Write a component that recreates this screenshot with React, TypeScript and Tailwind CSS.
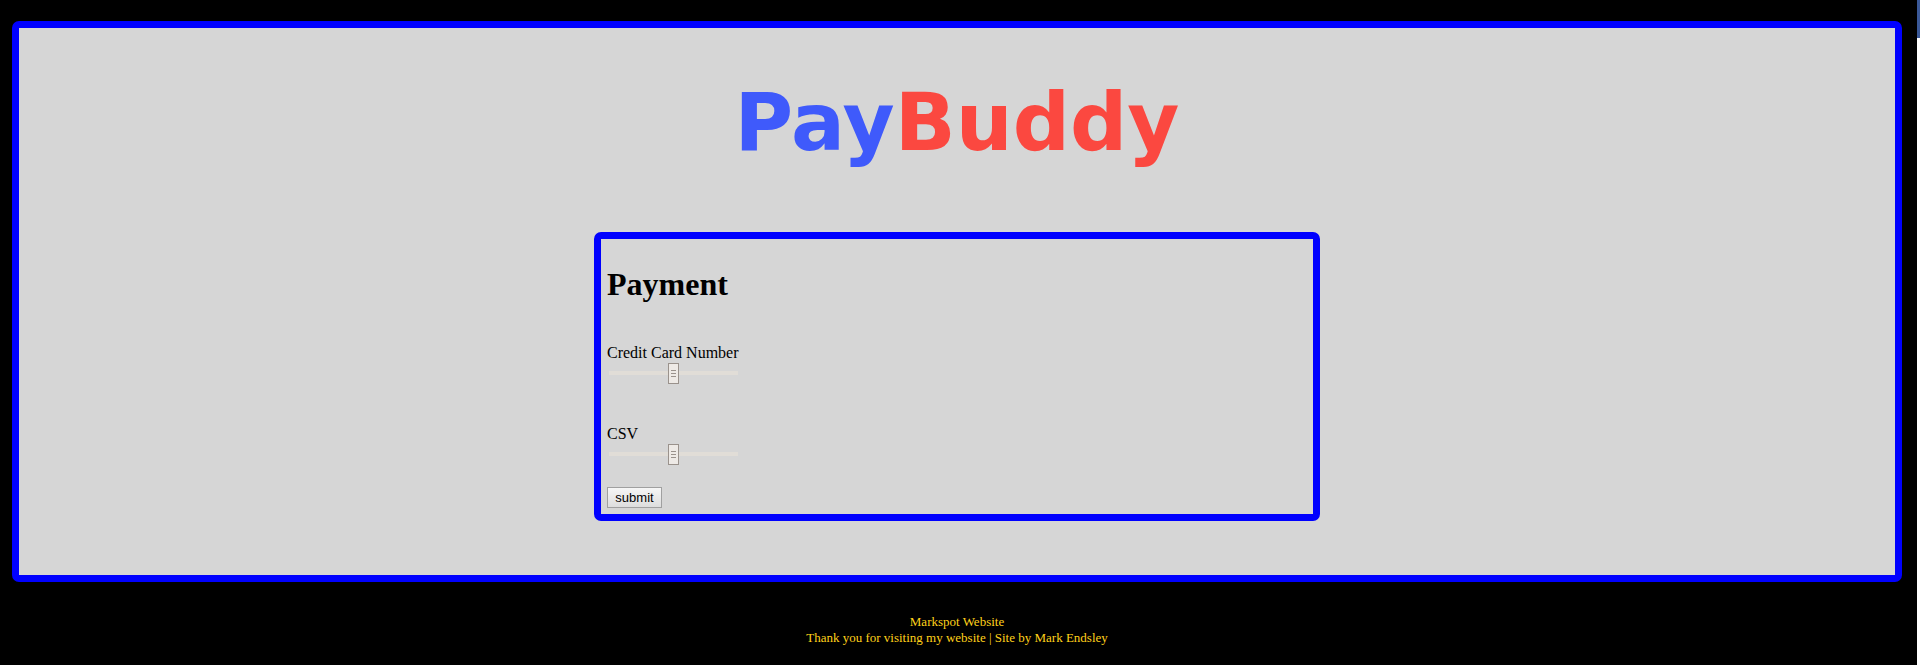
import { useId, useState } from "react";

function Logo() {
  return (
    <div className="text-center font-['Verdana','DejaVu_Sans',sans-serif] text-[80px] leading-24 font-bold">
      <span className="text-[#3f5afb]">Pay</span>
      <span className="text-[#fb4840]">Buddy</span>
    </div>
  );
}

function RangeField({ label }: { label: string }) {
  const id = useId();
  const [value, setValue] = useState(50);
  return (
    <div>
      <label htmlFor={id} className="block leading-[19px]">
        {label}
      </label>
      <input
        id={id}
        type="range"
        value={value}
        onChange={(e) => setValue(Number(e.target.value))}
        className="mx-0.5 block h-[21px] w-[129px] appearance-none bg-transparent [&::-webkit-slider-runnable-track]:h-1 [&::-webkit-slider-runnable-track]:bg-[#e1ddd7] [&::-webkit-slider-thumb]:-mt-2 [&::-webkit-slider-thumb]:h-[21px] [&::-webkit-slider-thumb]:w-[11px] [&::-webkit-slider-thumb]:appearance-none [&::-webkit-slider-thumb]:border [&::-webkit-slider-thumb]:border-[#9a928c] [&::-webkit-slider-thumb]:bg-[#eeeae6] [&::-webkit-slider-thumb]:bg-[linear-gradient(#9a928c_1px,transparent_1px,transparent_3px,#9a928c_3px,#9a928c_4px,transparent_4px,transparent_6px,#9a928c_6px)] [&::-webkit-slider-thumb]:bg-[length:5px_7px] [&::-webkit-slider-thumb]:bg-center [&::-webkit-slider-thumb]:bg-no-repeat"
      />
    </div>
  );
}

export default function App() {
  return (
    <div className="flex min-h-screen bg-black font-['Liberation_Serif',serif] text-base text-black">
      <div className="grow pt-[21px] pr-[15px] pl-3">
        <main className="rounded-[7px] border-[7px] border-[#0000ff] bg-[#d6d6d6] pt-[47px] pb-[54px]">
          <Logo />
          <form
            onSubmit={(e) => e.preventDefault()}
            className="mx-auto mt-[61px] w-[726px] rounded-[7px] border-[7px] border-[#0000ff] p-1.5"
          >
            <h1 className="mt-[21px] text-[32px] leading-9 font-bold">Payment</h1>
            <div className="mt-[41px] flex flex-col gap-[41px]">
              <RangeField label="Credit Card Number" />
              <RangeField label="CSV" />
            </div>
            <button
              type="submit"
              className="mt-[23px] block h-[21px] w-[55px] border border-[#a0a0a0] bg-linear-to-b from-[#f6f6f6] to-[#dddddd] font-['Liberation_Sans',sans-serif] text-[13px] leading-4"
            >
              submit
            </button>
          </form>
        </main>
        <footer className="mt-8 text-center text-[13px] leading-4 text-[#ffd11a]">
          <p>Markspot Website</p>
          <p>Thank you for visiting my website | Site by Mark Endsley</p>
        </footer>
      </div>
      <div className="w-[3px] bg-white">
        <div className="h-[38px] bg-[#3b5998]" />
      </div>
    </div>
  );
}
